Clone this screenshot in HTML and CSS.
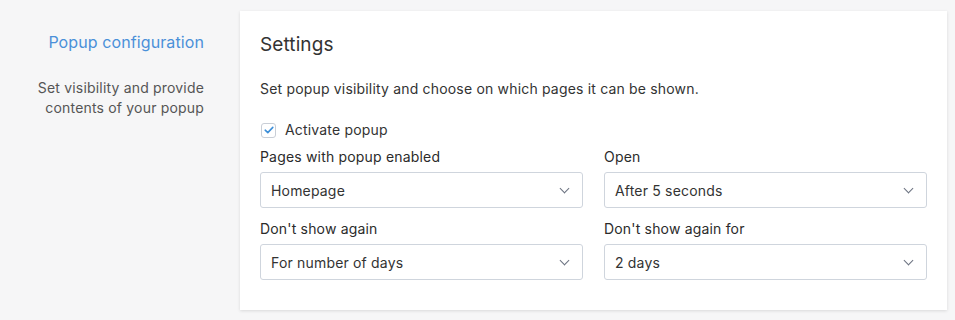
FILE: index.html
```html
<!DOCTYPE html>
<html>
<head>
    <meta charset="UTF-8">
    <title>Popup configuration</title>
    <link rel="stylesheet" href="styles.css">
</head>
<body>
    <div class="layout">
        <div class="intro">
            <div class="intro-title">Popup configuration</div>
            <div class="intro-text">Set visibility and provide contents of your popup</div>
        </div>
        <div class="card">
            <div class="card-title">Settings</div>
            <div class="card-text">Set popup visibility and choose on which pages it can be shown.</div>
            <label class="check-row">
                <span class="checkbox">
                    <svg width="10" height="8" viewBox="0 0 10 8"><path d="M1.2 4.2 L3.8 6.6 L8.8 1.4" fill="none" stroke="#3d8fd8" stroke-width="1.6" stroke-linecap="round" stroke-linejoin="round"/></svg>
                </span>
                Activate popup
            </label>
            <div class="fields">
                <div class="field">
                    <div class="field-label">Pages with popup enabled</div>
                    <div class="select">Homepage<span class="chevron"></span></div>
                </div>
                <div class="field">
                    <div class="field-label">Open</div>
                    <div class="select">After 5 seconds<span class="chevron"></span></div>
                </div>
                <div class="field">
                    <div class="field-label">Don't show again</div>
                    <div class="select">For number of days<span class="chevron"></span></div>
                </div>
                <div class="field">
                    <div class="field-label">Don't show again for</div>
                    <div class="select">2 days<span class="chevron"></span></div>
                </div>
            </div>
        </div>
    </div>
</body>
</html>
```

FILE: styles.css
```css
body {
    margin: 0;
    background-color: #f6f6f7;
    font-family: 'Inter', 'Liberation Sans', sans-serif;
    color: #2b2b2b;
    letter-spacing: 0.18px;
}

.layout {
    display: flex;
    padding: 11px 8px 10px 0;
    gap: 36px;
}

.intro {
    width: 204px;
    flex-shrink: 0;
    text-align: right;
    padding-top: 21px;
}

.intro-title {
    color: #4a90d9;
    font-size: 16px;
    line-height: 20px;
    letter-spacing: 0.1px;
}

.intro-text {
    margin-top: 26px;
    color: #555;
    font-size: 14px;
    line-height: 20px;
    padding-left: 30px;
}

.card {
    flex: 1;
    background-color: #fff;
    padding: 22px 20px 30px;
    box-shadow: 0 1px 3px rgba(0, 0, 0, 0.12);
}

.card-title {
    font-size: 19px;
    line-height: 24px;
    color: #333;
    letter-spacing: 0.1px;
}

.card-text {
    margin-top: 22px;
    font-size: 14px;
    line-height: 20px;
    color: #333;
}

.check-row {
    display: flex;
    align-items: center;
    gap: 9px;
    margin-top: 21px;
    font-size: 14px;
    line-height: 20px;
    color: #333;
}

.checkbox {
    width: 13px;
    height: 13px;
    margin-left: 1px;
    border: 1px solid #c9ced6;
    border-radius: 3px;
    display: flex;
    align-items: center;
    justify-content: center;
}

.fields {
    display: grid;
    grid-template-columns: 1fr 1fr;
    column-gap: 21px;
    row-gap: 11px;
    margin-top: 7px;
}

.field-label {
    font-size: 14px;
    line-height: 20px;
    color: #2b2b2b;
    margin-bottom: 5px;
}

.select {
    height: 34px;
    border: 1px solid #cfd5dd;
    border-radius: 3px;
    display: flex;
    align-items: center;
    justify-content: space-between;
    padding: 0 12px 0 10px;
    font-size: 14px;
    color: #333;
}

.chevron {
    width: 6px;
    height: 6px;
    border-right: 1.5px solid #6b7280;
    border-bottom: 1.5px solid #6b7280;
    transform: rotate(45deg);
    margin-top: -4px;
    margin-right: 2px;
}
```
